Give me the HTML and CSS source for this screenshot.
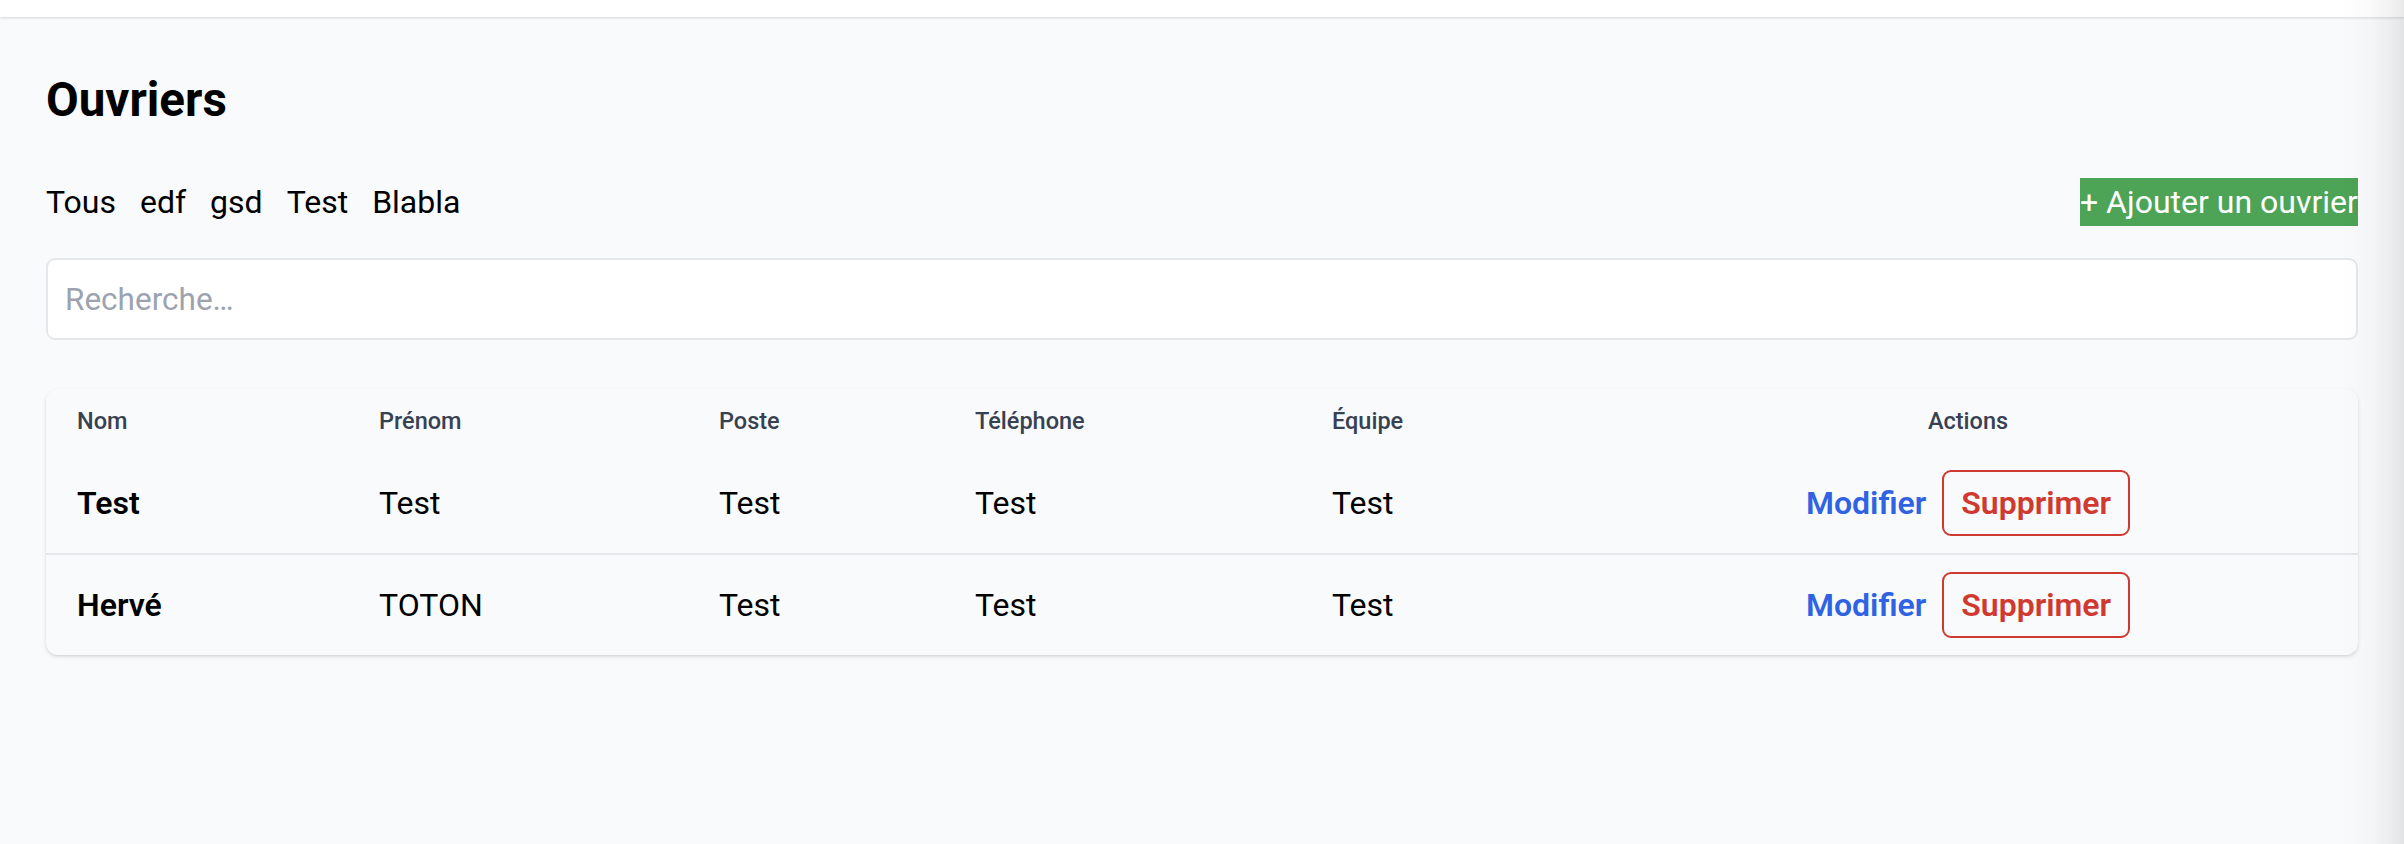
FILE: index.html
```html
<!DOCTYPE html>
<html lang="fr">
<head>
<meta charset="utf-8">
<title>Ouvriers</title>
<link rel="stylesheet" href="styles.css">
</head>
<body>
<header class="topbar"></header>
<main class="page">
  <h1 class="title">Ouvriers</h1>
  <div class="toolbar">
    <nav class="tabs">
      <button class="tab">Tous</button>
      <button class="tab">edf</button>
      <button class="tab">gsd</button>
      <button class="tab">Test</button>
      <button class="tab">Blabla</button>
    </nav>
    <button class="add-btn">+ Ajouter un ouvrier</button>
  </div>
  <input class="search" type="text" placeholder="Recherche…">
  <div class="card">
    <table class="table">
      <colgroup>
        <col class="c-nom"><col class="c-prenom"><col class="c-poste"><col class="c-tel"><col class="c-equipe"><col class="c-actions">
      </colgroup>
      <thead>
        <tr>
          <th>Nom</th><th>Prénom</th><th>Poste</th><th>Téléphone</th><th>Équipe</th><th class="th-actions">Actions</th>
        </tr>
      </thead>
      <tbody>
        <tr>
          <td class="td-nom">Test</td><td>Test</td><td>Test</td><td>Test</td><td>Test</td>
          <td><div class="actions"><a class="edit">Modifier</a><button class="delete">Supprimer</button></div></td>
        </tr>
        <tr>
          <td class="td-nom">Hervé</td><td>TOTON</td><td>Test</td><td>Test</td><td>Test</td>
          <td><div class="actions"><a class="edit">Modifier</a><button class="delete">Supprimer</button></div></td>
        </tr>
      </tbody>
    </table>
  </div>
</main>
<div class="edge-shadow"></div>
</body>
</html>
```
FILE: styles.css
```css
* { box-sizing: border-box; }
html, body {
  margin: 0;
  background: #f9fafb;
  font-family: Roboto, "Liberation Sans", sans-serif;
  color: #000;
}
.topbar {
  height: 17px;
  background: #fff;
  box-shadow: 0 1px 3px rgba(0,0,0,0.10), 0 1px 2px rgba(0,0,0,0.05);
  position: relative;
  z-index: 1;
}
.page {
  padding: 0 46px 40px 46px;
}
.title {
  margin: 55px 0 50px 0;
  font-size: 47.5px;
  line-height: 56px;
  font-weight: 700;
}
.toolbar {
  display: flex;
  align-items: center;
  justify-content: space-between;
  height: 48px;
}
.tabs {
  display: flex;
  gap: 24px;
}
.tab {
  border: 0;
  background: none;
  padding: 0;
  font: inherit;
  font-size: 32px;
  line-height: 45px;
  color: #000;
}
.add-btn {
  border: 0;
  background: #4da356;
  color: #fff;
  font: inherit;
  font-size: 32px;
  line-height: 48px;
  height: 48px;
  padding: 0;
  width: 278px;
  overflow: hidden;
  white-space: nowrap;
  text-align: left;
}
.search {
  display: block;
  width: 100%;
  margin-top: 32px;
  height: 82px;
  border: 2px solid #e5e7eb;
  border-radius: 9px;
  background: #fff;
  padding: 0 17px;
  font: inherit;
  font-size: 31.5px;
  color: #111;
  outline: none;
}
.search::placeholder { color: #9ca3af; }
.card {
  margin-top: 49px;
  background: #f9fafb;
  border-radius: 12px;
  box-shadow: 0 2px 4px rgba(0,0,0,0.10), 0 1px 2px rgba(0,0,0,0.06);
  overflow: hidden;
}
.table {
  width: 100%;
  border-collapse: collapse;
  table-layout: fixed;
}
.c-nom { width: 302px; }
.c-prenom { width: 340px; }
.c-poste { width: 256px; }
.c-tel { width: 357px; }
.c-equipe { width: 277px; }
.table th {
  text-align: left;
  font-size: 23.5px;
  line-height: 24px;
  font-weight: 500;
  color: #374151;
  padding: 20px 31px;
}
.table th.th-actions { text-align: center; }
.table td {
  font-size: 32px;
  line-height: 36px;
  padding: 17px 31px;
  vertical-align: middle;
  white-space: nowrap;
}
.table tbody tr + tr td { border-top: 2px solid #e5e7eb; }
.table td.td-nom { font-weight: 600; }
.actions {
  display: flex;
  justify-content: center;
  align-items: center;
  gap: 16px;
}
.edit {
  color: #2f63e3;
  font-weight: 600;
  cursor: pointer;
}
.delete {
  height: 66px;
  border: 2px solid #d0392f;
  border-radius: 9px;
  background: transparent;
  color: #d0392f;
  font: inherit;
  font-size: 32px;
  font-weight: 600;
  padding: 0 17px;
}
.edge-shadow {
  position: fixed;
  top: 0;
  right: 0;
  bottom: 0;
  width: 64px;
  pointer-events: none;
  z-index: 2;
  background: linear-gradient(to right, rgba(0,0,0,0) 0%, rgba(0,0,0,0.015) 45%, rgba(0,0,0,0.05) 80%, rgba(0,0,0,0.09) 100%);
}
```
